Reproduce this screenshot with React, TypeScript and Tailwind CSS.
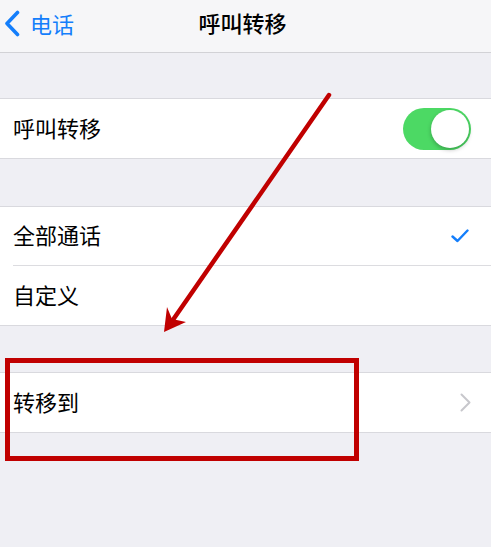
import React from "react";

const font = { fontFamily: '"Noto Sans CJK SC", "Noto Sans", sans-serif' };

function Toggle() {
  return (
    <div className="relative w-[68px] h-[42px] rounded-full bg-[#4cd964]">
      <div className="absolute right-[2px] top-[2px] w-[38px] h-[38px] rounded-full bg-white shadow-[0_2px_4px_rgba(0,0,0,0.25)]" />
    </div>
  );
}

function Check() {
  return (
    <svg width="18" height="14" viewBox="0 0 18 14" fill="none">
      <path d="M1.5 7.5 L6.5 12 L16.5 1.5" stroke="#147efb" strokeWidth="2.4" strokeLinecap="round" strokeLinejoin="round" />
    </svg>
  );
}

function Chevron() {
  return (
    <svg width="11" height="19" viewBox="0 0 11 19" fill="none">
      <path d="M1.5 1.5 L9.5 9.5 L1.5 17.5" stroke="#c7c7cc" strokeWidth="2" strokeLinecap="round" strokeLinejoin="round" />
    </svg>
  );
}

function Row({ label, right, inset }: { label: string; right?: React.ReactNode; inset?: boolean }) {
  return (
    <div className="bg-white pl-[13px]">
      <div className={`h-[59px] flex items-center justify-between pr-[20px] ${inset ? "border-b border-[#dcdce0]" : ""}`}>
        <span className="text-[22px] text-black leading-none -translate-y-[2px]">{label}</span>
        {right}
      </div>
    </div>
  );
}

function Group({ children }: { children: React.ReactNode }) {
  return <div className="border-y border-[#d9d9de]">{children}</div>;
}

export default function App() {
  return (
    <div className="relative w-[491px] h-[547px] overflow-hidden bg-[#efeff4]" style={font}>
      {/* Nav bar */}
      <div className="relative h-[53px] bg-[#f6f6f8] border-b border-[#d2d2d6] flex items-center justify-center">
        <div className="absolute left-[4px] top-0 h-full flex items-center gap-[9px] -translate-y-[3px]">
          <svg width="17" height="27" viewBox="0 0 17 27" fill="none">
            <path d="M13.5 2.5 L3 13.5 L13.5 24.5" stroke="#147efb" strokeWidth="3.6" strokeLinecap="round" strokeLinejoin="round" />
          </svg>
          <span className="text-[22px] text-[#147efb] leading-none">电话</span>
        </div>
        <span className="text-[22px] font-medium text-black leading-none -ml-[6px] -translate-y-[4px]">呼叫转移</span>
      </div>

      <div className="h-[45px]" />
      <Group>
        <Row label="呼叫转移" right={<Toggle />} />
      </Group>

      <div className="h-[47px]" />
      <Group>
        <Row label="全部通话" inset right={<div className="pr-[2px]"><Check /></div>} />
        <Row label="自定义" />
      </Group>

      <div className="h-[46px]" />
      <Group>
        <Row label="转移到" right={<Chevron />} />
      </Group>

      {/* Annotation: arrow */}
      <svg className="absolute left-0 top-0 pointer-events-none" width="491" height="547" viewBox="0 0 491 547">
        <line x1="329" y1="95" x2="168" y2="327" stroke="#c00000" strokeWidth="4.5" strokeLinecap="round" />
        <path d="M164 332 L167 307 L172 319 L186 322 Z" fill="#c00000" />
      </svg>

      {/* Annotation: box */}
      <div className="absolute left-[5px] top-[358px] w-[354px] h-[103px] border-[5px] border-[#c00000] pointer-events-none" />
    </div>
  );
}
